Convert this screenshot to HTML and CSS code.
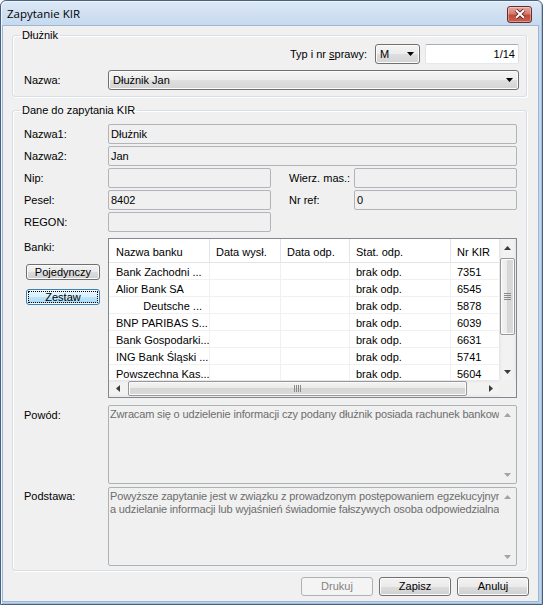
FILE: index.html
```html
<!DOCTYPE html>
<html lang="pl">
<head>
<meta charset="utf-8">
<title>Zapytanie KIR</title>
<link rel="stylesheet" href="styles.css">
</head>
<body>
<div class="window">
  <div class="titlebar">
    <span class="title">Zapytanie KIR</span>
    <div class="close">
      <svg width="12" height="10" viewBox="0 0 12 10"><path d="M2 1.2l8 7.6M10 1.2l-8 7.6" stroke="#5e2020" stroke-width="3.8" fill="none"/><path d="M2 1.2l8 7.6M10 1.2l-8 7.6" stroke="#fff" stroke-width="2" fill="none"/></svg>
    </div>
  </div>
  <div class="client">
    <fieldset class="group group-debtor">
      <legend>Dłużnik</legend>
      <div class="case-row">
        <span class="case-lbl">Typ i nr <u>s</u>prawy:</span>
        <div class="combo combo-m"><span>M</span><svg class="dd" width="7" height="4" viewBox="0 0 7 4"><path d="M0 0h7L3.5 4z"/></svg></div>
        <div class="textbox">1/14</div>
      </div>
      <div class="name-row">
        <span class="lbl">Nazwa:</span>
        <div class="combo combo-wide"><span>Dłużnik Jan</span><svg class="dd" width="7" height="4" viewBox="0 0 7 4"><path d="M0 0h7L3.5 4z"/></svg></div>
      </div>
    </fieldset>

    <fieldset class="group group-data">
      <legend>Dane do zapytania KIR</legend>
      <div class="form">
        <span class="lbl">Nazwa1:</span>
        <div class="field span4">Dłużnik</div>

        <span class="lbl">Nazwa2:</span>
        <div class="field span4">Jan</div>

        <span class="lbl">Nip:</span>
        <div class="field c2"></div>
        <span class="lbl lbl-c4">Wierz. mas.:</span>
        <div class="field c5"></div>

        <span class="lbl">Pesel:</span>
        <div class="field c2">8402</div>
        <span class="lbl lbl-c4">Nr ref:</span>
        <div class="field c5">0</div>

        <span class="lbl">REGON:</span>
        <div class="field c2"></div>

        <div class="banks-side">
          <span class="banks-lbl">Banki:</span>
          <div class="btn btn-small">Pojedynczy</div>
          <div class="btn btn-small btn-focus">Zestaw</div>
        </div>
        <div class="listview span4">
          <div class="lv-body">
            <table class="lv-table">
              <thead>
                <tr><th class="c1">Nazwa banku</th><th class="c2">Data wysł.</th><th class="c3">Data odp.</th><th class="c4">Stat. odp.</th><th class="c5">Nr KIR</th></tr>
              </thead>
              <tbody>
                <tr><td>Bank Zachodni ...</td><td></td><td></td><td>brak odp.</td><td>7351</td></tr>
                <tr><td>Alior Bank SA</td><td></td><td></td><td>brak odp.</td><td>6545</td></tr>
                <tr><td class="right">Deutsche ...</td><td></td><td></td><td>brak odp.</td><td>5878</td></tr>
                <tr><td>BNP PARIBAS S...</td><td></td><td></td><td>brak odp.</td><td>6039</td></tr>
                <tr><td>Bank Gospodarki...</td><td></td><td></td><td>brak odp.</td><td>6631</td></tr>
                <tr><td>ING Bank Śląski ...</td><td></td><td></td><td>brak odp.</td><td>5741</td></tr>
                <tr><td>Powszechna Kas...</td><td></td><td></td><td>brak odp.</td><td>5604</td></tr>
              </tbody>
            </table>
          </div>
          <div class="vscroll">
            <div class="sb-btn"><svg width="7" height="4" viewBox="0 0 7 4"><path d="M0 4h7L3.5 0z"/></svg></div>
            <div class="sb-vtrack">
              <div class="vthumb"><svg width="7" height="7" viewBox="0 0 7 7"><path d="M0 .5h7M0 2.5h7M0 4.5h7M0 6.5h7" stroke="#8a8a8a" fill="none"/></svg></div>
            </div>
            <div class="sb-btn"><svg width="7" height="4" viewBox="0 0 7 4"><path d="M0 0h7L3.5 4z"/></svg></div>
          </div>
          <div class="hscroll">
            <div class="sb-btn"><svg width="4" height="7" viewBox="0 0 4 7"><path d="M4 0v7L0 3.5z"/></svg></div>
            <div class="sb-htrack">
              <div class="hthumb"><svg width="7" height="7" viewBox="0 0 7 7"><path d="M.5 0v7M2.5 0v7M4.5 0v7M6.5 0v7" stroke="#8a8a8a" fill="none"/></svg></div>
            </div>
            <div class="sb-btn"><svg width="4" height="7" viewBox="0 0 4 7"><path d="M0 0v7L4 3.5z"/></svg></div>
          </div>
          <div class="sb-corner"></div>
        </div>

        <span class="lbl lbl-top lbl-reason">Powód:</span>
        <div class="memo span4 memo-reason">
          <div class="memo-text">
            <div class="memo-line">Zwracam się o udzielenie informacji czy podany dłużnik posiada rachunek bankowy w Państwa banku.</div>
          </div>
          <div class="memo-scroll">
            <div class="sb-btn"><svg width="7" height="4" viewBox="0 0 7 4"><path d="M0 4h7L3.5 0z"/></svg></div>
            <div class="sb-btn"><svg width="7" height="4" viewBox="0 0 7 4"><path d="M0 0h7L3.5 4z"/></svg></div>
          </div>
        </div>

        <span class="lbl lbl-top lbl-basis">Podstawa:</span>
        <div class="memo span4 memo-basis">
          <div class="memo-text">
            <div class="memo-line">Powyższe zapytanie jest w związku z prowadzonym postępowaniem egzekucyjnym przeciwko dłużnikowi</div>
            <div class="memo-line">a udzielanie informacji lub wyjaśnień świadomie fałszywych osoba odpowiedzialna ponosi odpowiedzialność</div>
          </div>
          <div class="memo-scroll">
            <div class="sb-btn"><svg width="7" height="4" viewBox="0 0 7 4"><path d="M0 4h7L3.5 0z"/></svg></div>
            <div class="sb-btn"><svg width="7" height="4" viewBox="0 0 7 4"><path d="M0 0h7L3.5 4z"/></svg></div>
          </div>
        </div>
      </div>
    </fieldset>

    <div class="actions">
      <div class="btn btn-action btn-disabled">Drukuj</div>
      <div class="btn btn-action">Zapisz</div>
      <div class="btn btn-action">Anuluj</div>
    </div>
  </div>
</div>
</body>
</html>
```

FILE: styles.css
```css
* { box-sizing: border-box; }
html, body { margin: 0; padding: 0; }
body {
  width: 543px;
  height: 605px;
  background: #ffffff;
  font-family: "Liberation Sans", Arial, sans-serif;
  font-size: 11px;
  color: #000;
  overflow: hidden;
}

/* ---------- window frame ---------- */
.window {
  width: 543px;
  height: 605px;
  border: 1px solid #47617f;
  border-radius: 6px 6px 0 0;
  background: linear-gradient(#dce8f5 0, #c4d8ee 26px, #bcd3ea 100%);
  padding: 0 4px 3px 2px;
  display: flex;
  flex-direction: column;
  box-shadow: inset 1px 1px 0 #eef4fb, inset -1px -1px 0 #a4bdd8;
}
.titlebar {
  height: 25px;
  flex: none;
  display: flex;
  align-items: center;
  justify-content: space-between;
  padding: 0 4px 0 4px;
}
.title {
  font-family: "Open Sans", "Noto Sans", sans-serif;
  font-size: 11.5px;
  color: #000;
  line-height: 16px;
  padding-top: 1px;
}
.close {
  width: 25px;
  height: 17px;
  margin-top: 1px;
  margin-right: 2px;
  border: 1px solid #6b2b2b;
  border-radius: 3px;
  background: linear-gradient(#e7a99e 0, #d47b6e 45%, #c24a3a 55%, #c9604e 100%);
  box-shadow: inset 0 0 0 1px rgba(255,255,255,0.35);
  display: flex;
  align-items: center;
  justify-content: center;
}

.client {
  flex: 1;
  min-height: 0;
  background: #f0f0f0;
  padding: 3px 11px 0 9px;
  display: flex;
  flex-direction: column;
  box-shadow: 0 0 0 1px #9fb6d0;
}

/* ---------- group boxes ---------- */
.group {
  margin: 0;
  min-width: 0;
  border: 1px solid #d5dfe5;
  border-radius: 3px;
  box-shadow: inset 1px 1px 0 #fff, 1px 1px 0 #fff;
}
.group legend {
  padding: 0 2px;
  margin-left: -4px;
  line-height: 13px;
  height: 13px;
}
.group-debtor { padding: 2px 7px 6px 11px; }
.group-data { margin-top: 7px; padding: 7px 8px 4px 11px; }

.case-row {
  display: flex;
  justify-content: flex-end;
  align-items: center;
  height: 20px;
}
.case-lbl { margin-right: 8px; }
.name-row {
  display: flex;
  align-items: center;
  height: 20px;
  margin-top: 6px;
}
.name-row .lbl { width: 84px; flex: none; }

/* ---------- controls ---------- */
.combo {
  height: 20px;
  border: 1px solid #707070;
  border-radius: 3px;
  background: linear-gradient(#f4f4f4 0, #ececec 50%, #dfdfdf 50%, #d3d3d3 100%);
  box-shadow: inset 0 0 0 1px #fbfbfb;
  display: flex;
  align-items: center;
  justify-content: space-between;
  padding: 0 5px 0 4px;
}
.combo-m { width: 45px; }
.combo-wide { flex: 1; padding-left: 4px; }
.dd { display: block; fill: #000; }

.textbox {
  width: 94px;
  height: 20px;
  margin-left: 5px;
  background: #fff;
  border: 1px solid #abadb3;
  border-color: #abadb3 #dbdfe6 #e3e9ef #e2e3ea;
  border-radius: 2px;
  text-align: right;
  line-height: 18px;
  padding-right: 3px;
}

.form {
  display: grid;
  grid-template-columns: 84px 163px 18px 65px 163px;
  row-gap: 2px;
  align-items: start;
}
.lbl { grid-column: 1; line-height: 20px; white-space: nowrap; }
.lbl-c4 { grid-column: 4; }
.c2 { grid-column: 2; }
.c5 { grid-column: 5; }
.lbl-top { line-height: 13px; }
.lbl-reason { margin-top: 5px; padding-top: 4px; }
.lbl-basis { margin-top: 1px; padding-top: 3px; }
.span4 { grid-column: 2 / span 4; }

.field {
  height: 20px;
  border: 1px solid #b1b4b8;
  border-radius: 2px;
  background: #f0f0f0;
  line-height: 18px;
  padding-left: 2px;
  white-space: nowrap;
  overflow: hidden;
}

/* ---------- banks list ---------- */
.banks-side {
  grid-column: 1;
  margin-top: 4px;
  display: flex;
  flex-direction: column;
  align-items: flex-start;
}
.banks-lbl { line-height: 13px; padding-top: 3px; }

.btn {
  border: 1px solid #707070;
  border-radius: 3px;
  background: linear-gradient(#f2f2f2 0, #ebebeb 50%, #dddddd 50%, #cfcfcf 100%);
  box-shadow: inset 0 0 0 1px #fcfcfc;
  text-align: center;
  white-space: nowrap;
}
.btn-small {
  width: 74px;
  height: 16px;
  margin-left: 2px;
  line-height: 14px;
  margin-top: 10px;
}
.btn-small + .btn-small { margin-top: 9px; }
.btn-focus {
  border-color: #3c7fb1;
  background: linear-gradient(#eaf6fd 0, #d9f0fc 50%, #bee6fd 50%, #a7d9f5 100%);
  box-shadow: inset 0 0 0 1px #f0f9fe;
  outline: 1px dotted #000;
  outline-offset: -3px;
}

.listview {
  margin-top: 4px;
  width: 409px;
  height: 160px;
  border: 1px solid #828790;
  background: #fff;
  display: grid;
  grid-template-columns: 390px 17px;
  grid-template-rows: 141px 17px;
}
.lv-body { overflow: hidden; }
.lv-table {
  border-collapse: separate;
  border-spacing: 0;
  table-layout: fixed;
  width: 422px;
}
.lv-table .c1 { width: 101px; }
.lv-table .c2 { width: 71px; }
.lv-table .c3 { width: 69px; }
.lv-table .c4 { width: 101px; }
.lv-table .c5 { width: 80px; }
.lv-table th {
  font-weight: normal;
  text-align: left;
  padding: 4px 0 0 6px;
  line-height: 19px;
  border-right: 1px solid #e3e5e8;
  border-bottom: 1px solid #e3e5e8;
  white-space: nowrap;
  color: #000;
}
.lv-table th.c1 { padding-left: 7px; }
.lv-table td {
  padding: 2px 0 0 6px;
  line-height: 14px;
  border-right: 1px solid #f0f0f0;
  border-bottom: 1px solid #f0f0f0;
  white-space: nowrap;
  overflow: hidden;
}
.lv-table td:first-child { padding-left: 7px; }
.lv-table td.right { text-align: right; padding-right: 7px; }

.vscroll {
  display: flex;
  flex-direction: column;
  background: linear-gradient(90deg, #e6e6e6 0, #f2f2f2 20%, #f2f2f2 80%, #e8e8e8 100%);
}
.hscroll {
  display: flex;
  background: linear-gradient(#e6e6e6 0, #f2f2f2 20%, #f2f2f2 80%, #e8e8e8 100%);
}
.sb-corner { background: #f0f0f0; }
.sb-btn {
  width: 17px;
  height: 17px;
  flex: none;
  display: flex;
  align-items: center;
  justify-content: center;
  fill: #3b3b3b;
}
.sb-vtrack { flex: 1; padding: 2px 1px 0 1px; }
.sb-htrack { flex: 1; padding: 1px 0 0 2px; }
.vthumb {
  height: 77px;
  border: 1px solid #979797;
  border-radius: 2px;
  background: linear-gradient(90deg, #f2f2f2 0, #ebebeb 50%, #d6d6d6 50%, #dadada 100%);
  box-shadow: inset 0 0 0 1px #fbfbfb;
  display: flex;
  align-items: center;
  justify-content: center;
}
.hthumb {
  width: 339px;
  height: 15px;
  border: 1px solid #979797;
  border-radius: 2px;
  background: linear-gradient(#f2f2f2 0, #ebebeb 50%, #d6d6d6 50%, #dadada 100%);
  box-shadow: inset 0 0 0 1px #fbfbfb;
  display: flex;
  align-items: center;
  justify-content: center;
}

/* ---------- memo boxes ---------- */
.memo {
  width: 409px;
  height: 79px;
  border: 1px solid #adb2b5;
  border-radius: 2px;
  background: #f0f0f0;
  display: flex;
}
.memo-reason { margin-top: 5px; }
.memo-basis { margin-top: 1px; }
.memo-text {
  flex: 1;
  overflow: hidden;
  padding: 2px 0 0 1px;
  color: #6d6d6d;
}
.memo-line { line-height: 13px; white-space: nowrap; letter-spacing: -0.15px; }
.memo-scroll {
  width: 17px;
  flex: none;
  display: flex;
  flex-direction: column;
  justify-content: space-between;
}
.memo-scroll .sb-btn { fill: #a3a3a3; }

/* ---------- bottom buttons ---------- */
.actions {
  display: flex;
  justify-content: flex-end;
  gap: 6px;
  margin-top: 6px;
  margin-right: -2px;
}
.btn-action {
  width: 72px;
  height: 19px;
  line-height: 17px;
}
.btn-disabled {
  border-color: #adb2b5;
  background: #f4f4f4;
  box-shadow: none;
  color: #838383;
}
```
